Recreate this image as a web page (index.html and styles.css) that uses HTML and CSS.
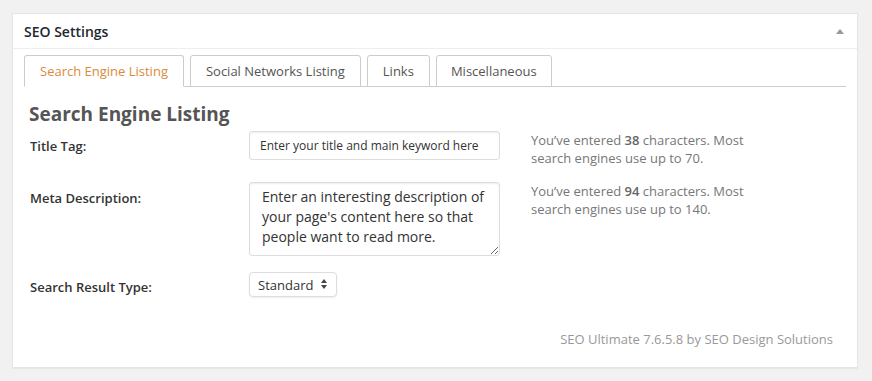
FILE: index.html
```html
<!DOCTYPE html>
<html lang="en">
<head>
<meta charset="UTF-8">
<title>SEO Settings</title>
<link rel="stylesheet" href="styles.css">
</head>
<body>

    <div class="postbox">
        <div class="postbox-header">
            <h2>SEO Settings</h2>
            <span class="toggle-arrow"></span>
        </div>

        <div class="inside">
            <ul class="tabs">
                <li class="tab active">Search Engine Listing</li>
                <li class="tab">Social Networks Listing</li>
                <li class="tab">Links</li>
                <li class="tab">Miscellaneous</li>
            </ul>

            <h3>Search Engine Listing</h3>

            <div class="form-grid">
                <label class="field-label row-title">Title Tag:</label>
                <input class="text-input" type="text" value="Enter your title and main keyword here">
                <p class="help">You’ve entered <strong>38</strong> characters. Most search engines use up to 70.</p>

                <label class="field-label row-meta">Meta Description:</label>
                <textarea class="text-area">Enter an interesting description of your page's content here so that people want to read more.</textarea>
                <p class="help">You’ve entered <strong>94</strong> characters. Most search engines use up to 140.</p>

                <label class="field-label row-type">Search Result Type:</label>
                <div class="select-wrap">
                    <select class="select-input">
                        <option>Standard</option>
                    </select>
                </div>
                <div></div>
            </div>

            <p class="credit">SEO Ultimate 7.6.5.8 by SEO Design Solutions</p>
        </div>
    </div>

</body>
</html>
```

FILE: styles.css
```css
/* WordPress admin metabox */
body {
    margin: 0;
    padding: 13px 14px 13px 12px;
    background-color: #f1f1f1;
    font-family: "Open Sans", sans-serif;
    color: #444;
}
.postbox {
    background-color: #fff;
    border: 1px solid #e5e5e5;
    box-shadow: 0 1px 1px rgba(0,0,0,0.04);
}
.postbox-header {
    display: flex;
    align-items: center;
    justify-content: space-between;
    height: 34px;
    padding: 0 12px 0 11px;
    border-bottom: 1px solid #eee;
}
.postbox-header h2 {
    margin: 0;
    font-size: 14px;
    font-weight: 600;
    color: #23282d;
}
.toggle-arrow {
    width: 0;
    height: 0;
    border-left: 4px solid transparent;
    border-right: 4px solid transparent;
    border-bottom: 5px solid #999;
    margin-right: 1px;
}
.inside {
    padding: 6px 11px 19px 11px;
}

/* tabs */
.tabs {
    display: flex;
    gap: 6px;
    list-style: none;
    margin: 0;
    padding: 0;
    border-bottom: 1px solid #ccc;
}
.tab {
    padding: 0 15px;
    height: 30px;
    line-height: 30px;
    margin-bottom: -1px;
    font-size: 13px;
    color: #555;
    border: 1px solid #ccc;
    border-radius: 3px 3px 0 0;
    background-color: #fff;
}
.tab:nth-child(4) {
    padding: 0 14px;
}
.tab.active {
    color: #d98b3a;
    border-bottom-color: #fff;
}

h3 {
    margin: 14px 0 4px 5px;
    font-size: 19px;
    font-weight: 700;
    color: #555;
}

/* form rows */
.form-grid {
    display: grid;
    grid-template-columns: 188px 251px auto;
    column-gap: 31px;
    row-gap: 15px;
    align-items: start;
    padding-left: 6px;
}
.field-label {
    font-size: 13px;
    font-weight: 600;
    color: #333;
}
.row-title {
    padding-top: 6px;
}
.row-meta {
    padding-top: 7px;
}
.row-type {
    padding-top: 7px;
}
.text-input {
    box-sizing: border-box;
    width: 251px;
    height: 29px;
    padding: 0 10px;
    font-family: "Open Sans", sans-serif;
    font-size: 12px;
    color: #333;
    border: 1px solid #ddd;
    border-radius: 3px;
    box-shadow: inset 0 1px 2px rgba(0,0,0,0.07);
}
.text-area {
    box-sizing: border-box;
    width: 251px;
    height: 74px;
    padding: 4px 12px;
    font-family: "Open Sans", sans-serif;
    font-size: 14px;
    line-height: 20px;
    color: #333;
    border: 1px solid #ddd;
    border-radius: 3px;
    box-shadow: inset 0 1px 2px rgba(0,0,0,0.07);
    resize: vertical;
}
.help {
    margin: 0;
    width: 240px;
    font-size: 13px;
    line-height: 18px;
    color: #777;
}
.help strong {
    font-weight: 600;
    color: #666;
}

/* select with stepper arrows */
.select-wrap {
    position: relative;
    width: 88px;
    margin-top: 1px;
}
.select-input {
    appearance: none;
    -webkit-appearance: none;
    box-sizing: border-box;
    width: 88px;
    height: 25px;
    padding: 0 8px;
    font-family: "Open Sans", sans-serif;
    font-size: 13px;
    color: #333;
    background-color: #fff;
    border: 1px solid #ddd;
    border-radius: 4px;
    box-shadow: 0 1px 2px rgba(0,0,0,0.07);
}
.select-wrap::before,
.select-wrap::after {
    content: "";
    position: absolute;
    right: 10px;
    width: 0;
    height: 0;
    border-left: 3px solid transparent;
    border-right: 3px solid transparent;
}
.select-wrap::before {
    top: 7px;
    border-bottom: 4px solid #444;
}
.select-wrap::after {
    top: 13px;
    border-top: 4px solid #444;
}

.credit {
    margin: 33px 13px 0 0;
    text-align: right;
    font-size: 13px;
    color: #999;
}
```
